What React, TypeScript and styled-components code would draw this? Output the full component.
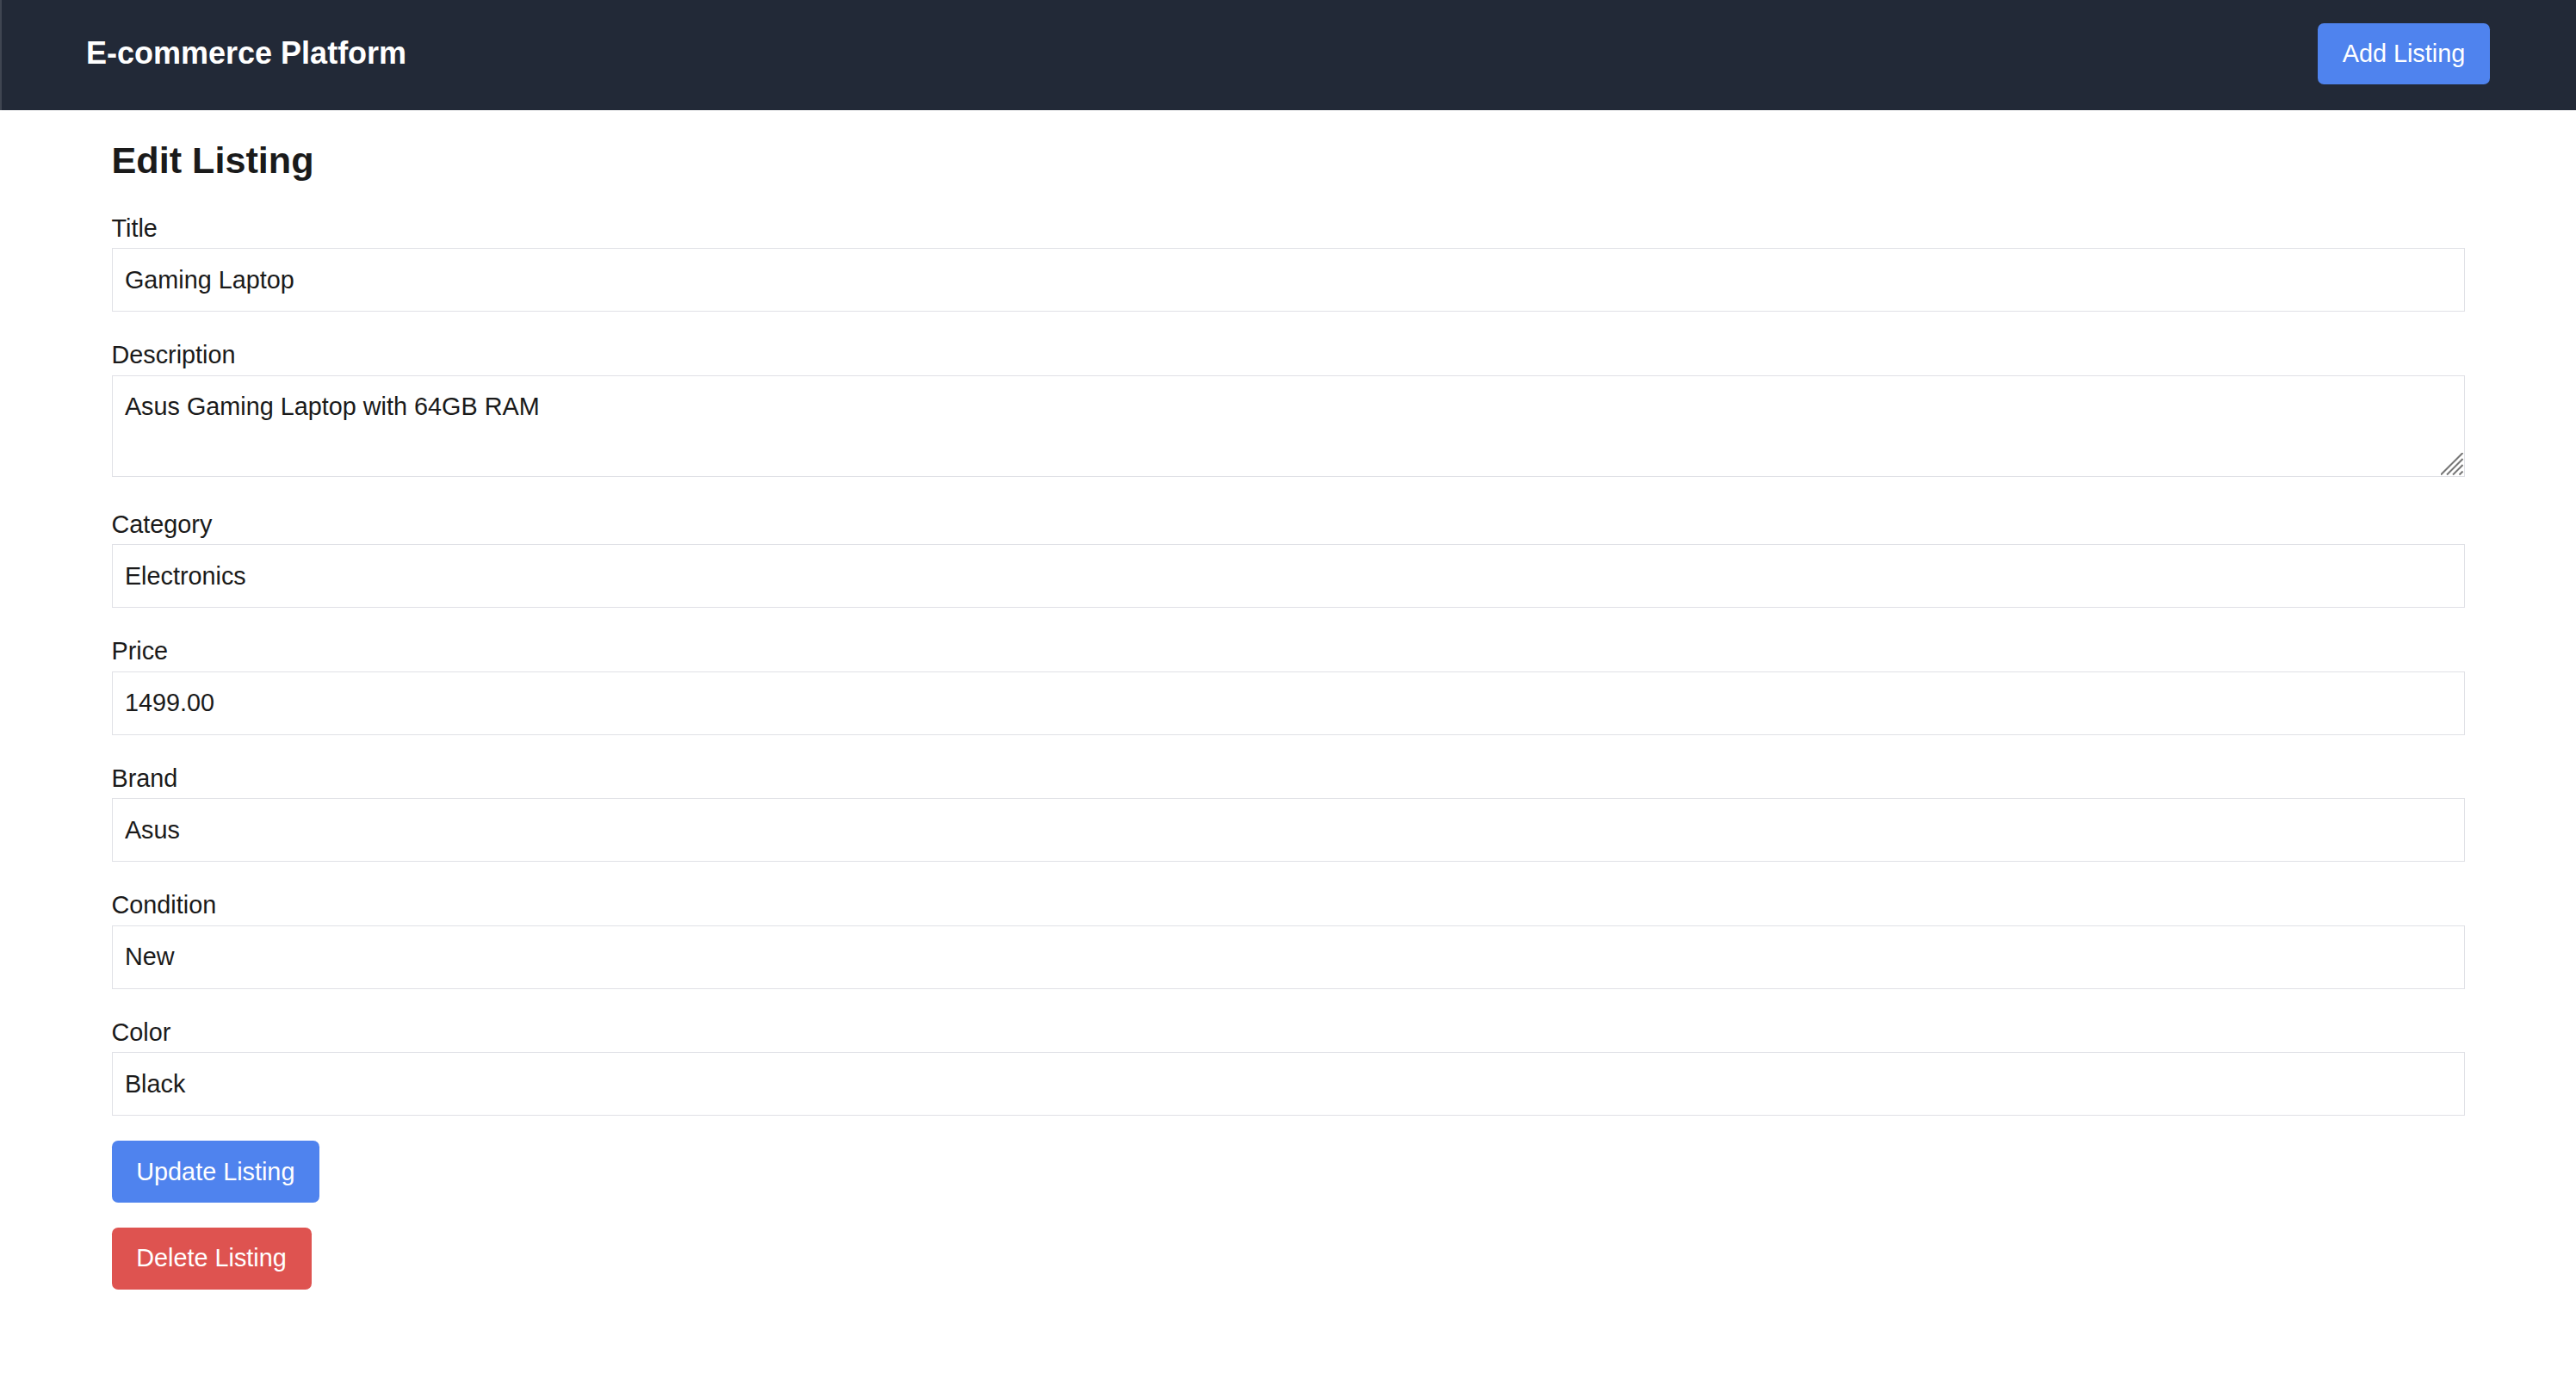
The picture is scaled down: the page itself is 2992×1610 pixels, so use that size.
import React from "react";
import styled, { createGlobalStyle } from "styled-components";

const GlobalStyle = createGlobalStyle`
  html, body {
    margin: 0;
    padding: 0;
    background: #ffffff;
  }
  body {
    font-family: "Liberation Sans", Arial, Helvetica, sans-serif;
    color: #1a1a1a;
  }
  * { box-sizing: border-box; }
`;

const Page = styled.div`
  min-height: 1610px;
  background: #ffffff;
`;

const NavBar = styled.header`
  height: 128px;
  background: #222937;
  border-left: 2px solid #3f4551;
  display: flex;
  align-items: center;
  justify-content: space-between;
  padding: 0 100px 3px 98px;
`;

const Brand = styled.div`
  color: #ffffff;
  font-size: 36px;
  font-weight: 700;
  line-height: 50.4px;
`;

const Button = styled.button<{ $tone: "blue" | "red" }>`
  display: block;
  border: none;
  border-radius: 7.2px;
  padding: 14.4px 28.8px;
  font-family: "Liberation Sans", Arial, Helvetica, sans-serif;
  font-size: 28.8px;
  line-height: 43.2px;
  color: #ffffff;
  cursor: pointer;
  background: ${(p) => (p.$tone === "blue" ? "#4f83ee" : "#de5350")};
`;

const Main = styled.main`
  width: 2733px;
  margin: 0 auto;
  padding-top: 30px;
`;

const Heading = styled.h1`
  margin: 0 0 28px 0;
  font-size: 43.2px;
  line-height: 57.6px;
  font-weight: 700;
  color: #1a1a1a;
`;

const Form = styled.form`
  display: flex;
  flex-direction: column;
  align-items: flex-start;
`;

const Field = styled.div`
  width: 100%;
  margin-bottom: 28.8px;
`;

const Label = styled.label`
  display: block;
  font-size: 28.8px;
  line-height: 43.2px;
  margin-bottom: 1.5px;
  color: #1a1a1a;
`;

const TextInput = styled.input`
  display: block;
  width: 100%;
  height: 74px;
  border: 1px solid #e0e1e6;
  border-radius: 0;
  padding: 0 14.4px;
  font-family: "Liberation Sans", Arial, Helvetica, sans-serif;
  font-size: 28.8px;
  color: #1a1a1a;
  background: #ffffff;
  outline: none;
`;

const AreaWrap = styled.div`
  position: relative;
  margin-bottom: 5.2px;
`;

const TextArea = styled.textarea`
  display: block;
  width: 100%;
  height: 118px;
  border: 1px solid #e0e1e6;
  border-radius: 0;
  padding: 14.4px;
  font-family: "Liberation Sans", Arial, Helvetica, sans-serif;
  font-size: 28.8px;
  line-height: 43.2px;
  color: #1a1a1a;
  background: #ffffff;
  outline: none;
  resize: none;
`;

const Grip = styled.svg`
  position: absolute;
  right: 2px;
  bottom: 2px;
  width: 26px;
  height: 26px;
  pointer-events: none;
`;

const ButtonGap = styled.div`
  height: 28.8px;
`;

type FieldDef = { label: string; value: string; multiline?: boolean };

const fields: FieldDef[] = [
  { label: "Title", value: "Gaming Laptop" },
  { label: "Description", value: "Asus Gaming Laptop with 64GB RAM", multiline: true },
  { label: "Category", value: "Electronics" },
  { label: "Price", value: "1499.00" },
  { label: "Brand", value: "Asus" },
  { label: "Condition", value: "New" },
  { label: "Color", value: "Black" },
];

export default function App() {
  return (
    <Page>
      <GlobalStyle />
      <NavBar>
        <Brand>E-commerce Platform</Brand>
        <Button $tone="blue" type="button">Add Listing</Button>
      </NavBar>
      <Main>
        <Heading>Edit Listing</Heading>
        <Form onSubmit={(e) => e.preventDefault()}>
          {fields.map((f) => {
            const id = `field-${f.label.toLowerCase()}`;
            return (
              <Field key={f.label}>
                <Label htmlFor={id}>{f.label}</Label>
                {f.multiline ? (
                  <AreaWrap>
                    <TextArea id={id} defaultValue={f.value} />
                    <Grip viewBox="0 0 26 26" aria-hidden="true">
                      <g stroke="#767676" strokeWidth="2" strokeLinecap="butt">
                        <line x1="0" y1="25.5" x2="25.5" y2="0" />
                        <line x1="7" y1="25.5" x2="25.5" y2="7" />
                        <line x1="14" y1="25.5" x2="25.5" y2="14" />
                        <line x1="21.5" y1="25.5" x2="25.5" y2="21.5" />
                      </g>
                    </Grip>
                  </AreaWrap>
                ) : (
                  <TextInput id={id} type="text" defaultValue={f.value} />
                )}
              </Field>
            );
          })}
          <Button $tone="blue" type="submit">Update Listing</Button>
          <ButtonGap />
          <Button $tone="red" type="button">Delete Listing</Button>
        </Form>
      </Main>
    </Page>
  );
}
